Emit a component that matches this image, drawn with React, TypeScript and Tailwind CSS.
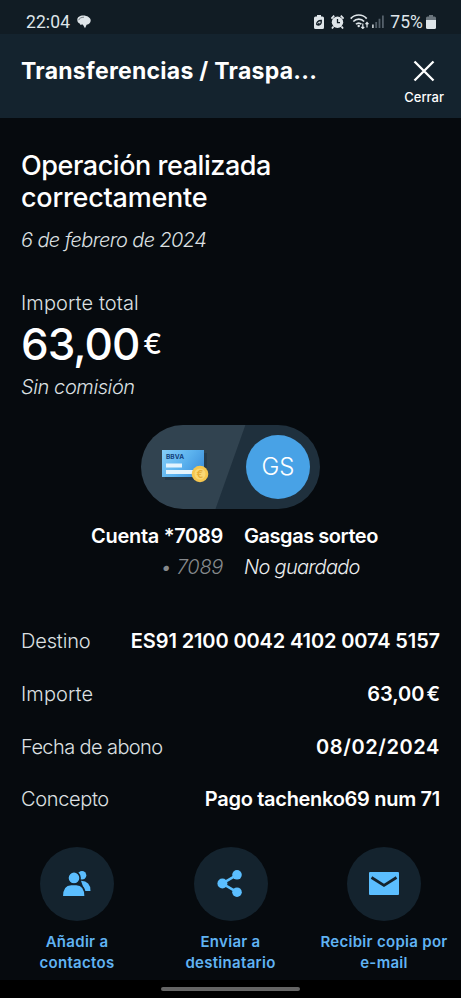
import type { ReactNode } from 'react';

type DetailRow = {
  label: string;
  value: ReactNode;
  labelClass: string;
  valueClass: string;
};

const DETAILS: DetailRow[] = [
  {
    label: 'Destino',
    value: 'ES91 2100 0042 4102 0074 5157',
    labelClass: 'tracking-[-0.15px]',
    valueClass: 'tracking-[-0.12px]',
  },
  {
    label: 'Importe',
    value: (
      <>
        63,00<span className="ml-[2px]">€</span>
      </>
    ),
    labelClass: 'tracking-[0.1px]',
    valueClass: 'tracking-normal',
  },
  {
    label: 'Fecha de abono',
    value: '08/02/2024',
    labelClass: 'tracking-[-0.6px]',
    valueClass: 'tracking-[0.6px]',
  },
  {
    label: 'Concepto',
    value: 'Pago tachenko69 num 71',
    labelClass: 'tracking-[-0.35px]',
    valueClass: 'tracking-[-0.3px]',
  },
];

function StatusBar() {
  return (
    <div className="flex h-[34px] items-center justify-between bg-[#111c24] pt-[9px] pr-[25px] pl-[26px] text-[#dfe5e9]">
      <div className="flex items-center gap-[7px]">
        <span className="pt-[2px] font-[Roboto] text-[17.5px] leading-none tracking-[0.1px]">22:04</span>
        <svg width="14" height="14" viewBox="0 0 14 14" fill="currentColor">
          <path d="M6.2.6C2.8.6.3 2.4.3 4.9c0 1.6 1 2.9 2.4 3.7l.5 1.200 2.600-.2 2.200 3.600 1.600-3.500c2.500-.6 4.100-2.300 4.100-4.300C13.700 2.800 10.200.6 6.200.6Z" />
          <path d="M1.600 5.200C2.200 3.200 4.300 2.300 7 2.200" fill="none" stroke="#111c24" strokeWidth=".5" />
        </svg>
      </div>
      <div className="flex items-center">
        <svg width="10" height="14" viewBox="0 0 10 14" fill="currentColor">
          <path d="M3 0h4v1.500h1.500q1.500 0 1.500 1.500v9.500q0 1.500-1.500 1.500h-7Q0 14 0 12.500V3q0-1.500 1.500-1.500H3Z" />
          <path d="M2.800 9.800C2.200 7.200 4 5.500 7.300 5.500c.3 3.200-1.200 5-3.600 4.400l1.700-1.900" fill="none" stroke="#111c24" strokeWidth="1.300" />
        </svg>
        <svg className="ml-[7px]" width="13" height="14" viewBox="0 0 13 14" fill="currentColor">
          <circle cx="6.500" cy="7.300" r="5.700" />
          <path d="M.4 3.600 3.200.6M12.600 3.600 9.800.6M2.500 11.500l-1.500 2M10.500 11.500l1.500 2" stroke="currentColor" strokeWidth="1.800" />
          <path d="M6.500 4v3.700H9" fill="none" stroke="#111c24" strokeWidth="1.300" />
        </svg>
        <svg className="ml-[6px]" width="20" height="15" viewBox="0 0 20 15" fill="none" stroke="currentColor" strokeWidth="1.700">
          <path d="M.7 4.600C5-.2 12.500-.2 16.700 4.600M3.300 7.500c3-3.300 8-3.300 10.800 0M6 10.300c1.500-1.700 3.900-1.700 5.400 0" />
          <circle cx="8.700" cy="12" r="1.200" fill="currentColor" stroke="none" />
          <path d="M12.800 9.500v5M11.300 12.800l1.500 1.700 1.500-1.700M17 13.500v-5M15.500 10.200 17 8.500l1.500 1.700" strokeWidth="1.200" />
        </svg>
        <svg className="ml-[2px]" width="12" height="13" viewBox="0 0 12 13">
          <path d="M0 9.500h1.800V13H0Z" fill="#b9c0c5" />
          <path d="M3.300 7h1.800v6H3.300ZM6.600 3.800h1.800V13H6.600ZM10 .5h1.800V13H10Z" fill="#54606a" />
        </svg>
        <span className="ml-[6px] pt-[2px] font-[Roboto] text-[17.5px] leading-none tracking-[0.1px]">75%</span>
        <svg className="ml-[3px]" width="10" height="14" viewBox="0 0 10 14">
          <path d="M3 0h4v1.500h1.500Q10 1.500 10 3v2H0V3q0-1.500 1.500-1.500H3Z" fill="#6b757d" />
          <path d="M0 5h10v7.500q0 1.500-1.500 1.500h-7Q0 14 0 12.500Z" fill="currentColor" />
        </svg>
      </div>
    </div>
  );
}

function Header() {
  return (
    <header className="flex h-[84px] items-start justify-between bg-[#14232e] pr-[17px] pl-[21px]">
      <h1 className="pt-[21px] text-[23px] leading-[32px] font-bold tracking-[0.27px]">Transferencias / Traspa...</h1>
      <button type="button" className="flex flex-col items-center pt-[26px]">
        <svg width="22" height="22" viewBox="0 0 22 22" stroke="currentColor" strokeWidth="2.300" fill="none">
          <path d="m1.500 1.500 19 19M20.500 1.500l-19 19" />
        </svg>
        <span className="mt-[5px] text-[13px] leading-[20px] font-medium">Cerrar</span>
      </button>
    </header>
  );
}

function AccountCard() {
  return (
    <svg width="50" height="38" viewBox="0 0 50 38">
      <defs>
        <linearGradient id="card" x1="0" y1="0" x2="1" y2="0.500">
          <stop offset="0" stopColor="#85cdf8" />
          <stop offset="0.600" stopColor="#5bb2ee" />
          <stop offset="1" stopColor="#4296df" />
        </linearGradient>
      </defs>
      <rect x="5" y="5" width="42" height="27" fill="#1c3144" opacity="0.500" />
      <rect x="2" y="2" width="42" height="27" fill="url(#card)" />
      <text x="6" y="11" fontSize="6.500" fontWeight="700" textLength="18" fill="#12417c" fontFamily="Inter, sans-serif">
        BBVA
      </text>
      <path d="M6 15.500h16v4H6ZM6 22h30v4H6Z" fill="#e3f3fd" />
      <circle cx="40" cy="26" r="8.300" fill="#f6c74f" />
      <circle cx="40" cy="26" r="5.500" fill="#fad874" />
      <text x="40" y="29.500" textAnchor="middle" fontSize="10" fontWeight="600" fill="#e7ad35" fontFamily="Inter, sans-serif">
        €
      </text>
    </svg>
  );
}

function Participants() {
  return (
    <div className="mx-auto flex h-[84px] w-[179px] items-center justify-between rounded-full bg-[linear-gradient(109.600deg,#314350_49.700%,#1f303d_50.200%)] pr-[10px] pl-[19px]">
      <AccountCard />
      <span className="flex size-[64px] items-center justify-center rounded-full bg-[#48a2e6] text-[24px] font-light">
        GS
      </span>
    </div>
  );
}

function Action({ icon, children }: { icon: ReactNode; children: ReactNode }) {
  return (
    <button type="button" className="flex w-[153.5px] flex-col items-center text-[#60b3f3]">
      <span className="flex size-[74px] items-center justify-center rounded-full bg-[#14232e] text-[#5bbeff]">{icon}</span>
      <span className="mt-[10px] text-[15px] leading-[21px] font-semibold tracking-[0.3px] whitespace-nowrap">
        {children}
      </span>
    </button>
  );
}

export default function App() {
  return (
    <div className="flex h-[998px] w-[461px] flex-col overflow-hidden bg-[#060a0e] font-[Inter,sans-serif] text-white">
      <StatusBar />
      <Header />

      <main className="flex-1">
        <div className="px-[21px] pt-[32px]">
          <h2 className="text-[27px] leading-[32px] font-medium">
            <span className="tracking-[-0.45px]">Operación realizada</span>
            <br />
            <span className="tracking-[-0.25px]">correctamente</span>
          </h2>
          <p className="mt-[11px] text-[20px] leading-[30px] font-light tracking-[-0.6px] text-[#dde0e2] italic">
            6 de febrero de 2024
          </p>

          <p className="mt-[33px] text-[20px] leading-[30px] font-light tracking-[0.1px] text-[#dde0e2]">
            Importe total
          </p>
          <p className="flex h-[54px] items-center pb-[3px]">
            <span className="text-[44px] leading-[54px] font-medium tracking-[-1px]">63,00</span>
            <span className="ml-[4px] text-[28px] leading-[54px] font-medium">€</span>
          </p>
          <p className="text-[20px] leading-[30px] font-light tracking-[-0.4px] text-[#dde0e2] italic">Sin comisión</p>
        </div>

        <div className="mt-[23px]">
          <Participants />
          <div className="mt-[12px] grid grid-cols-[223px_1fr] gap-x-[21px] text-[20px] leading-[31px]">
            <span className="text-right font-semibold tracking-[-0.3px]">Cuenta *7089</span>
            <span className="font-semibold tracking-[-0.45px]">Gasgas sorteo</span>
            <span className="text-right font-light tracking-[-0.3px] text-[#85898c] italic">• 7089</span>
            <span className="font-light tracking-[-0.7px] text-[#eceeef] italic">No guardado</span>
          </div>
        </div>

        <dl className="mt-[32px] px-[21px] text-[20px]">
          {DETAILS.map((row) => (
            <div key={row.label} className="flex h-[52.700px] items-center justify-between whitespace-nowrap">
              <dt className={`font-light text-[#dde0e2] ${row.labelClass}`}>{row.label}</dt>
              <dd className={`font-semibold ${row.valueClass}`}>{row.value}</dd>
            </div>
          ))}
        </dl>

        <div className="mt-[21px] flex justify-center">
          <Action
            icon={
              <svg width="28" height="26" viewBox="0 0 28 26" fill="currentColor">
                <circle cx="19" cy="4.300" r="4.300" />
                <path d="M18 9.800q9.500.2 9.500 10.200h-6Z" />
                <g stroke="#14232e" strokeWidth="1.600">
                  <circle cx="11" cy="6.900" r="6.100" />
                  <path d="M-.8 25.800q0-12.300 9-12.300h5q9 0 9 12.300Z" />
                </g>
              </svg>
            }
          >
            Añadir a
            <br />
            contactos
          </Action>
          <Action
            icon={
              <svg width="28" height="28" viewBox="0 0 28 28" fill="currentColor">
                <path d="M20 4.800 5.400 13.500 20 22.200" fill="none" stroke="currentColor" strokeWidth="2.600" />
                <circle cx="5.400" cy="13.500" r="5" />
                <circle cx="20" cy="4.800" r="4.800" />
                <circle cx="20" cy="22.200" r="4.800" />
              </svg>
            }
          >
            Enviar a
            <br />
            destinatario
          </Action>
          <Action
            icon={
              <svg width="30" height="23" viewBox="0 0 30 23">
                <rect width="30" height="23" rx="1" fill="currentColor" />
                <path d="m2.500 5.500 12.500 8 12.500-8" fill="none" stroke="#14232e" strokeWidth="2.700" />
              </svg>
            }
          >
            Recibir copia por
            <br />
            e-mail
          </Action>
        </div>
      </main>

      <div className="flex h-[18px] justify-center bg-black pt-[7px]">
        <div className="h-[4px] w-[139px] rounded-full bg-[#656565]" />
      </div>
    </div>
  );
}
